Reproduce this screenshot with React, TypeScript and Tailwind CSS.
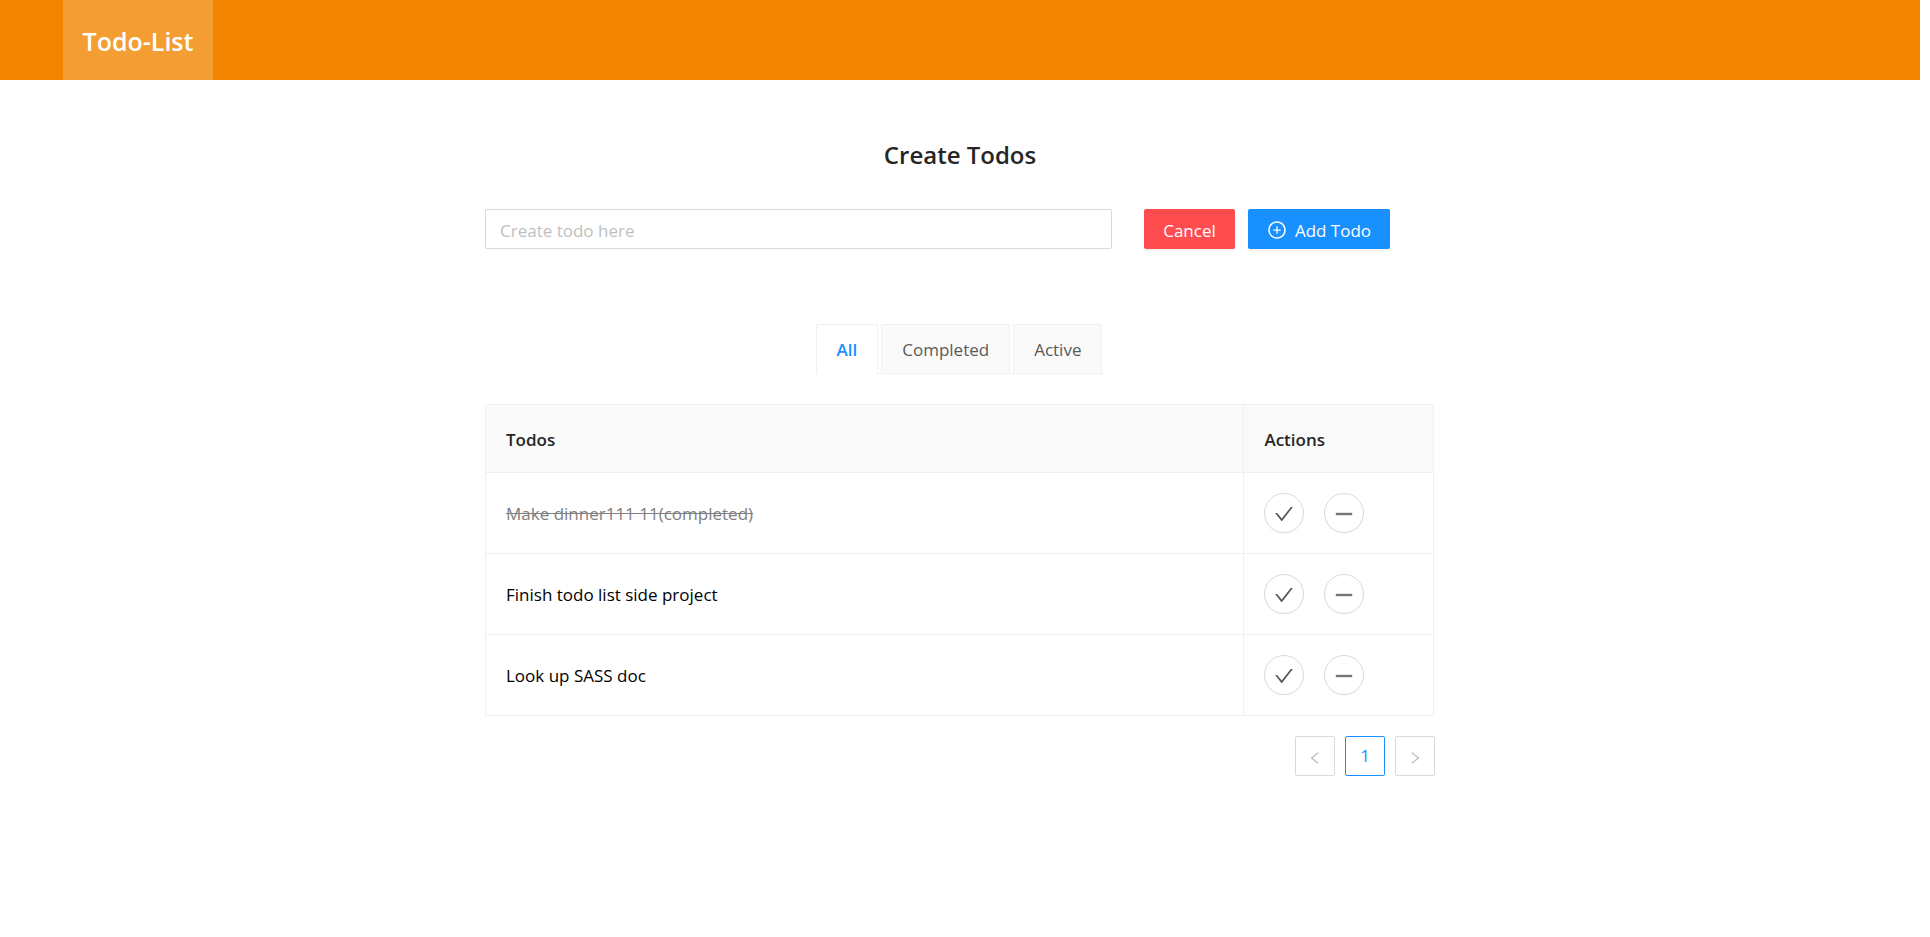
import { useState } from "react";
import {
  AiOutlineCheck,
  AiOutlineLeft,
  AiOutlineMinus,
  AiOutlinePlusCircle,
  AiOutlineRight,
} from "react-icons/ai";

type Todo = { id: number; title: string; completed: boolean };
type Filter = "All" | "Completed" | "Active";

const initialTodos: Todo[] = [
  { id: 1, title: "Make dinner111 11", completed: true },
  { id: 2, title: "Finish todo list side project", completed: false },
  { id: 3, title: "Look up SASS doc", completed: false },
];

const filters: Filter[] = ["All", "Completed", "Active"];

function Header() {
  return (
    <header className="flex h-20 bg-[#f28500] pl-[63px]">
      <a
        href="#"
        className="flex w-[150px] items-center justify-center bg-[#f39d33] pt-0.5 text-[25px] font-semibold text-white"
      >
        Todo-List
      </a>
    </header>
  );
}

function TodoForm({ onAdd }: { onAdd: (title: string) => void }) {
  const [title, setTitle] = useState("");
  return (
    <form
      className="flex"
      onSubmit={(e) => {
        e.preventDefault();
        if (title.trim()) onAdd(title.trim());
        setTitle("");
      }}
    >
      <input
        type="text"
        aria-label="Create todo"
        placeholder="Create todo here"
        value={title}
        onChange={(e) => setTitle(e.target.value)}
        className="h-10 w-[66%] rounded-xs border border-[#d9d9d9] px-3.5 pt-0.5 placeholder:text-[#bfbfbf] focus:outline-none"
      />
      <div className="ml-8 flex gap-[13px]">
        <button
          type="button"
          onClick={() => setTitle("")}
          className="h-10 w-[91px] rounded-xs bg-[#ff4d4f] pt-1 text-white shadow-[0_2px_0_rgba(0,0,0,0.045)]"
        >
          Cancel
        </button>
        <button
          type="submit"
          className="flex h-10 w-[142px] items-center justify-center gap-2 rounded-xs bg-[#1890ff] pt-0.5 text-white shadow-[0_2px_0_rgba(0,0,0,0.045)]"
        >
          <AiOutlinePlusCircle size={20} />
          <span className="pt-0.5">Add Todo</span>
        </button>
      </div>
    </form>
  );
}

function Tabs({ value, onChange }: { value: Filter; onChange: (f: Filter) => void }) {
  return (
    <div role="tablist" className="flex">
      {filters.map((f) => (
        <div key={f} className={f === value ? "flex" : "flex border-b border-[#f0f0f0] pl-[3px]"}>
          <button
            type="button"
            role="tab"
            aria-selected={f === value}
            onClick={() => onChange(f)}
            className={
              f === value
                ? "h-[50px] rounded-t-xs border border-b-0 border-[#f0f0f0] bg-white px-5 font-semibold text-[#1890ff]"
                : "h-[49px] rounded-t-xs border border-b-0 border-[#f0f0f0] bg-[#fafafa] px-5 pt-px text-[#595959]"
            }
          >
            {f}
          </button>
        </div>
      ))}
      <div className="w-0.5 border-b border-[#f0f0f0]" />
    </div>
  );
}

const circleButton =
  "flex size-10 items-center justify-center rounded-full border border-[#d9d9d9] bg-white pt-0.5 text-[#595959] shadow-[0_2px_0_rgba(0,0,0,0.016)]";

function TodoTable({
  todos,
  onToggle,
  onRemove,
}: {
  todos: Todo[];
  onToggle: (id: number) => void;
  onRemove: (id: number) => void;
}) {
  return (
    <table className="w-full table-fixed border-separate border-spacing-0 rounded-t-xs border-t border-l border-[#f0f0f0] text-left">
      <colgroup>
        <col className="w-4/5" />
        <col className="w-1/5" />
      </colgroup>
      <thead>
        <tr className="h-[68px] bg-[#fafafa] text-[#262626]">
          <th scope="col" className="border-r border-b border-[#f0f0f0] px-5 pt-0.5 font-semibold">
            Todos
          </th>
          <th scope="col" className="border-r border-b border-[#f0f0f0] px-5 pt-0.5 font-semibold">
            Actions
          </th>
        </tr>
      </thead>
      <tbody>
        {todos.map((t) => (
          <tr key={t.id} className="h-[81px]">
            <td
              className={
                t.completed
                  ? "border-r border-b border-[#f0f0f0] px-5 pt-0.5 text-[#808080] line-through"
                  : "border-r border-b border-[#f0f0f0] px-5 pt-0.5 text-black"
              }
            >
              {t.completed ? `${t.title}(completed)` : t.title}
            </td>
            <td className="border-r border-b border-[#f0f0f0] px-5">
              <div className="flex gap-5">
                <button
                  type="button"
                  aria-label="Complete"
                  onClick={() => onToggle(t.id)}
                  className={circleButton}
                >
                  <AiOutlineCheck size={22} />
                </button>
                <button
                  type="button"
                  aria-label="Remove"
                  onClick={() => onRemove(t.id)}
                  className={circleButton}
                >
                  <AiOutlineMinus size={22} strokeWidth={24} />
                </button>
              </div>
            </td>
          </tr>
        ))}
      </tbody>
    </table>
  );
}

function Pagination() {
  return (
    <nav aria-label="Pages" className="flex justify-end gap-2.5">
      <button
        type="button"
        aria-label="Previous page"
        disabled
        className="flex size-10 items-center justify-center rounded-xs border border-[#d9d9d9] pt-1 text-[#bfbfbf]"
      >
        <AiOutlineLeft size={16} />
      </button>
      <button
        type="button"
        aria-current="page"
        className="size-10 rounded-xs border border-[#1890ff] text-[#1890ff]"
      >
        1
      </button>
      <button
        type="button"
        aria-label="Next page"
        disabled
        className="flex size-10 items-center justify-center rounded-xs border border-[#d9d9d9] pt-1 text-[#bfbfbf]"
      >
        <AiOutlineRight size={16} />
      </button>
    </nav>
  );
}

export default function App() {
  const [todos, setTodos] = useState(initialTodos);
  const [filter, setFilter] = useState<Filter>("All");
  const shown = todos.filter((t) => filter === "All" || t.completed === (filter === "Completed"));

  return (
    <div className="min-h-screen bg-white pr-2.5 font-['Segoe_UI','Open_Sans',sans-serif] text-[17px] leading-7">
      <Header />
      <main className="mx-auto flex max-w-[950px] flex-col pt-[55px]">
        <h1 className="text-center text-[24px] leading-10 font-semibold text-[#262626]">
          Create Todos
        </h1>
        <div className="pt-[34px]">
          <TodoForm
            onAdd={(title) => setTodos([...todos, { id: Date.now(), title, completed: false }])}
          />
        </div>
        <div className="flex justify-center pt-[75px] pb-[30px]">
          <Tabs value={filter} onChange={setFilter} />
        </div>
        <div className="pr-px">
          <TodoTable
            todos={shown}
            onToggle={(id) =>
              setTodos(todos.map((t) => (t.id === id ? { ...t, completed: !t.completed } : t)))
            }
            onRemove={(id) => setTodos(todos.filter((t) => t.id !== id))}
          />
        </div>
        <div className="pt-5">
          <Pagination />
        </div>
      </main>
    </div>
  );
}
